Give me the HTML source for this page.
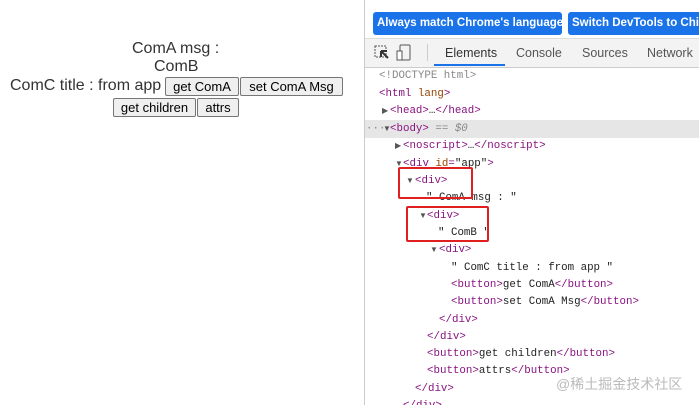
<!DOCTYPE html>
<html><head><style>
body{margin:0;width:699px;height:405px;overflow:hidden;background:#fff;font-family:"Liberation Sans",Arial,sans-serif;position:relative}
.a{position:absolute;white-space:nowrap}
.l{font-size:16px;color:#333}
.b{position:absolute;font-size:13px;border:1px solid #767676;background:#efefef;border-radius:2px;height:19px;line-height:17px;text-align:center;color:#000;box-sizing:border-box}
.dt{position:absolute;left:364px;top:0;width:335px;height:405px;border-left:1px solid #ccc;background:#fff;overflow:hidden}
.bb{position:absolute;top:12px;height:23px;line-height:23px;background:#1a73e8;color:#fff;font-weight:bold;font-size:11.5px;border-radius:3px;overflow:hidden;white-space:nowrap;box-sizing:border-box;padding-left:4px}
.c{font-family:"Liberation Mono",monospace;font-size:10.8px;position:absolute;white-space:pre;color:#222;line-height:14px}
.t{color:#881280}.at{color:#994500}.g{color:#888}
.tri{position:absolute;font-size:8px;color:#555;line-height:14px}
.red{position:absolute;border:2px solid #e02020;border-radius:2px}
</style></head><body>
<div class="a l" style="left:132px;top:40px">ComA msg :</div>
<div class="a l" style="left:154px;top:58px">ComB</div>
<div class="a l" style="left:10px;top:77px">ComC title : from app</div>
<div class="b" style="left:165px;top:77px;width:74px">get ComA</div>
<div class="b" style="left:240px;top:77px;width:103px">set ComA Msg</div>
<div class="b" style="left:113px;top:98px;width:83px">get children</div>
<div class="b" style="left:197px;top:98px;width:42px">attrs</div>

<div class="dt">
<div class="bb" style="left:8px;width:189px">Always match Chrome's language</div>
<div class="bb" style="left:203px;width:140px">Switch DevTools to Chinese</div>
<div style="position:absolute;left:0;top:38px;width:335px;height:28px;border-top:1px solid #ddd;border-bottom:1px solid #ccc;background:#f3f3f3"></div>
<svg style="position:absolute;left:9px;top:44px" width="40" height="18"><rect x="1" y="2" width="11" height="11" fill="none" stroke="#555" stroke-dasharray="2 1"/><path d="M7 7 L14 14 M7 7 L7 13 M7 7 L13 7" stroke="#333" stroke-width="2" fill="none"/><rect x="26" y="1" width="10" height="15" rx="1" fill="none" stroke="#555"/><rect x="23" y="7" width="5" height="9" fill="#fff" stroke="#555"/></svg>
<div style="position:absolute;left:62px;top:44px;width:1px;height:17px;background:#ccc"></div>
<div class="a" style="left:80px;top:46px;font-size:12.5px;color:#333">Elements</div>
<div style="position:absolute;left:69px;top:64px;width:71px;height:2px;background:#1a73e8"></div>
<div class="a" style="left:151px;top:46px;font-size:12.5px;color:#555">Console</div>
<div class="a" style="left:217px;top:46px;font-size:12.5px;color:#555">Sources</div>
<div class="a" style="left:282px;top:46px;font-size:12.5px;color:#555">Network</div>
<div style="position:absolute;left:0;top:120px;width:335px;height:18px;background:#e6e6e6"></div>

<div class="c g" style="left:14px;top:69px">&lt;!DOCTYPE html&gt;</div>
<div class="c" style="left:14px;top:87px"><span class="t">&lt;html</span> <span class="at">lang</span><span class="t">&gt;</span></div>
<div class="tri" style="left:17px;top:104px">▶</div>
<div class="c" style="left:25px;top:104px"><span class="t">&lt;head&gt;</span>…<span class="t">&lt;/head&gt;</span></div>
<div class="c g" style="left:1px;top:122px">···</div>
<div class="tri" style="left:18px;top:122px">▼</div>
<div class="c" style="left:25px;top:122px"><span class="t">&lt;body&gt;</span> <span class="g">== <i>$0</i></span></div>
<div class="tri" style="left:30px;top:139px">▶</div>
<div class="c" style="left:38px;top:139px"><span class="t">&lt;noscript&gt;</span>…<span class="t">&lt;/noscript&gt;</span></div>
<div class="tri" style="left:30px;top:157px">▼</div>
<div class="c" style="left:38px;top:157px"><span class="t">&lt;div</span> <span class="at">id</span><span class="t">=</span>"app"<span class="t">&gt;</span></div>
<div class="tri" style="left:41px;top:174px">▼</div>
<div class="c" style="left:50px;top:174px"><span class="t">&lt;div&gt;</span></div>
<div class="c" style="left:61px;top:191px">" ComA msg : "</div>
<div class="tri" style="left:54px;top:209px">▼</div>
<div class="c" style="left:62px;top:209px"><span class="t">&lt;div&gt;</span></div>
<div class="c" style="left:73px;top:226px">" ComB "</div>
<div class="tri" style="left:65px;top:243px">▼</div>
<div class="c" style="left:74px;top:243px"><span class="t">&lt;div&gt;</span></div>
<div class="c" style="left:86px;top:261px">" ComC title : from app "</div>
<div class="c" style="left:86px;top:278px"><span class="t">&lt;button&gt;</span>get ComA<span class="t">&lt;/button&gt;</span></div>
<div class="c" style="left:86px;top:295px"><span class="t">&lt;button&gt;</span>set ComA Msg<span class="t">&lt;/button&gt;</span></div>
<div class="c" style="left:74px;top:313px"><span class="t">&lt;/div&gt;</span></div>
<div class="c" style="left:62px;top:330px"><span class="t">&lt;/div&gt;</span></div>
<div class="c" style="left:62px;top:347px"><span class="t">&lt;button&gt;</span>get children<span class="t">&lt;/button&gt;</span></div>
<div class="c" style="left:62px;top:364px"><span class="t">&lt;button&gt;</span>attrs<span class="t">&lt;/button&gt;</span></div>
<div class="c" style="left:50px;top:382px"><span class="t">&lt;/div&gt;</span></div>
<div class="c" style="left:38px;top:399px"><span class="t">&lt;/div&gt;</span></div>

<div class="red" style="left:33px;top:167px;width:71px;height:28px"></div>
<div class="red" style="left:41px;top:206px;width:79px;height:32px"></div>
<div class="a" style="left:191px;top:374px;font-size:14px;color:#bbb;font-family:'Liberation Sans','Noto Sans CJK SC',sans-serif">@稀土掘金技术社区</div>
</div>
</body></html>
